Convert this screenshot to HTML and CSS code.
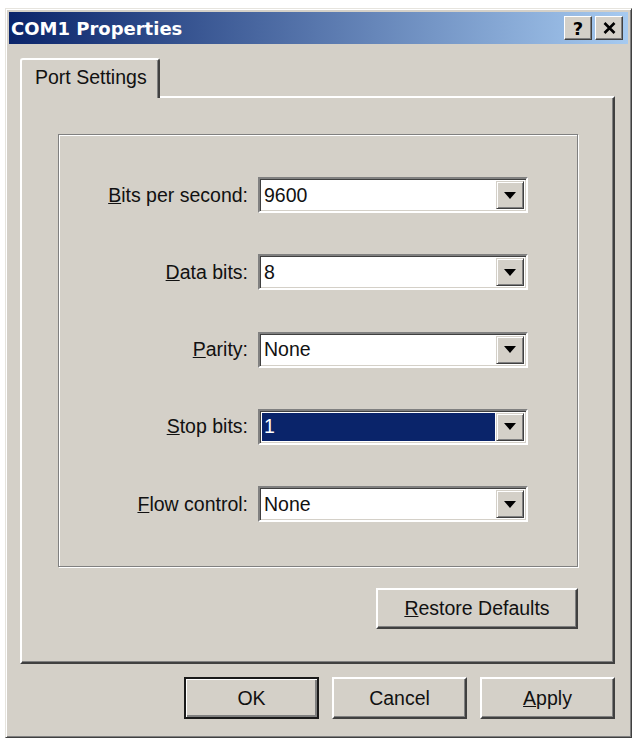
FILE: index.html
```html
<!DOCTYPE html>
<html lang="en">
<head>
<meta charset="UTF-8">
<title>COM1 Properties</title>
<link rel="stylesheet" href="styles.css">
</head>
<body>
<div class="window">
    <div class="titlebar">
        <span class="title">COM1 Properties</span>
        <div class="title-buttons">
            <span class="tbtn help">?</span>
            <span class="tbtn close">
                <svg width="13" height="12" viewBox="0 0 13 12"><path d="M1.5 1 L11.5 11 M11.5 1 L1.5 11" stroke="#000" stroke-width="2.6" fill="none"/></svg>
            </span>
        </div>
    </div>
    <div class="content">
        <div class="tabs">
            <div class="tab">Port Settings</div>
        </div>
        <div class="panel">
            <div class="groupbox">
                <div class="settings">
                    <label class="label"><u>B</u>its per second:</label>
                    <div class="combo"><span class="value">9600</span><span class="drop"><i class="arrow"></i></span></div>

                    <label class="label"><u>D</u>ata bits:</label>
                    <div class="combo"><span class="value">8</span><span class="drop"><i class="arrow"></i></span></div>

                    <label class="label"><u>P</u>arity:</label>
                    <div class="combo"><span class="value">None</span><span class="drop"><i class="arrow"></i></span></div>

                    <label class="label"><u>S</u>top bits:</label>
                    <div class="combo"><span class="value selected">1</span><span class="drop"><i class="arrow"></i></span></div>

                    <label class="label"><u>F</u>low control:</label>
                    <div class="combo"><span class="value">None</span><span class="drop"><i class="arrow"></i></span></div>
                </div>
            </div>
            <div class="panel-actions">
                <button class="btn restore"><u>R</u>estore Defaults</button>
            </div>
        </div>
        <div class="dialog-buttons">
            <button class="btn default">OK</button>
            <button class="btn">Cancel</button>
            <button class="btn"><u>A</u>pply</button>
        </div>
    </div>
</div>
</body>
</html>
```

FILE: styles.css
```css
* {
    box-sizing: border-box;
}
body {
    margin: 0;
    background: #fff;
    font-family: "Liberation Sans", Arial, sans-serif;
    font-size: 19.5px;
    color: #111;
}
.window {
    margin: 8px 0 0 5px;
    width: 627px;
    height: 730px;
    background: #d4d0c8;
    border: 1px solid;
    border-color: #e6e4de #404040 #404040 #e6e4de;
    box-shadow: inset 1px 1px 0 #fff, inset -1px -1px 0 #808080;
    padding: 3px 3px 0 3px;
}
.titlebar {
    height: 32px;
    background: linear-gradient(to right, #0a246a, #a6caf0);
    display: flex;
    align-items: center;
    justify-content: space-between;
    padding: 0 5px 0 2px;
}
.title {
    font-family: "DejaVu Sans", Verdana, sans-serif;
    font-weight: bold;
    font-size: 18px;
    color: #fff;
}
.title-buttons {
    display: flex;
    gap: 3px;
}
.tbtn {
    width: 28px;
    height: 24px;
    background: #d4d0c8;
    border: 1px solid;
    border-color: #fff #404040 #404040 #fff;
    box-shadow: inset -1px -1px 0 #808080;
    display: flex;
    align-items: center;
    justify-content: center;
}
.help {
    font-family: "DejaVu Sans", Verdana, sans-serif;
    font-weight: bold;
    font-size: 18px;
    color: #000;
}
.content {
    padding: 14px 13px 0 11px;
}
.tabs {
    display: flex;
    height: 40px;
    margin-bottom: -2px;
    position: relative;
    z-index: 1;
}
.tab {
    width: 140px;
    height: 40px;
    background: #d4d0c8;
    border-left: 2px solid #fff;
    border-top: 2px solid #fff;
    border-right: 2px solid #404040;
    box-shadow: inset -1px 0 0 #808080;
    border-top-left-radius: 3px;
    border-top-right-radius: 3px;
    padding: 6px 0 0 13px;
}
.panel {
    height: 568px;
    border: 2px solid;
    border-color: #fff #404040 #404040 #fff;
    box-shadow: inset -1px -1px 0 #808080;
    padding: 36px 35px 0 36px;
}
.groupbox {
    height: 433px;
    border: 1px solid #808080;
    box-shadow: 1px 1px 0 #fff, inset 1px 1px 0 #fff;
    padding-top: 42px;
}
.settings {
    display: grid;
    grid-template-columns: 189px 270px;
    column-gap: 10px;
    row-gap: 41.25px;
}
.label {
    text-align: right;
    align-self: center;
}
.combo {
    height: 36px;
    display: flex;
    background: #fff;
    border: 2px solid;
    border-color: #808080 #fff #fff #808080;
    box-shadow: inset 1px 1px 0 #404040, inset -1px -1px 0 #d4d0c8;
    padding: 2px;
}
.value {
    flex: 1;
    display: flex;
    align-items: center;
    padding-left: 2px;
    margin-right: 1px;
}
.value.selected {
    background: #0a246a;
    color: #fff;
}
.drop {
    width: 28px;
    background: #d4d0c8;
    border: 1px solid;
    border-color: #d4d0c8 #404040 #404040 #d4d0c8;
    box-shadow: inset 1px 1px 0 #fff, inset -1px -1px 0 #808080;
    display: flex;
    align-items: center;
    justify-content: center;
}
.arrow {
    width: 0;
    height: 0;
    border-left: 6px solid transparent;
    border-right: 6px solid transparent;
    border-top: 7px solid #000;
}
.panel-actions {
    display: flex;
    justify-content: flex-end;
    margin-top: 21px;
}
.btn {
    font: inherit;
    color: #111;
    background: #d4d0c8;
    border: 2px solid;
    border-color: #fff #404040 #404040 #fff;
    box-shadow: inset -1px -1px 0 #808080;
    padding: 0;
    width: 135px;
    height: 42px;
}
.btn.restore {
    width: 202px;
    height: 41px;
}
.btn.default {
    border-color: #1a1a1a;
    box-shadow: inset 1px 1px 0 #fff, inset -2px -2px 0 #808080;
}
.dialog-buttons {
    display: flex;
    justify-content: flex-end;
    gap: 13px;
    margin-top: 13px;
}
```
